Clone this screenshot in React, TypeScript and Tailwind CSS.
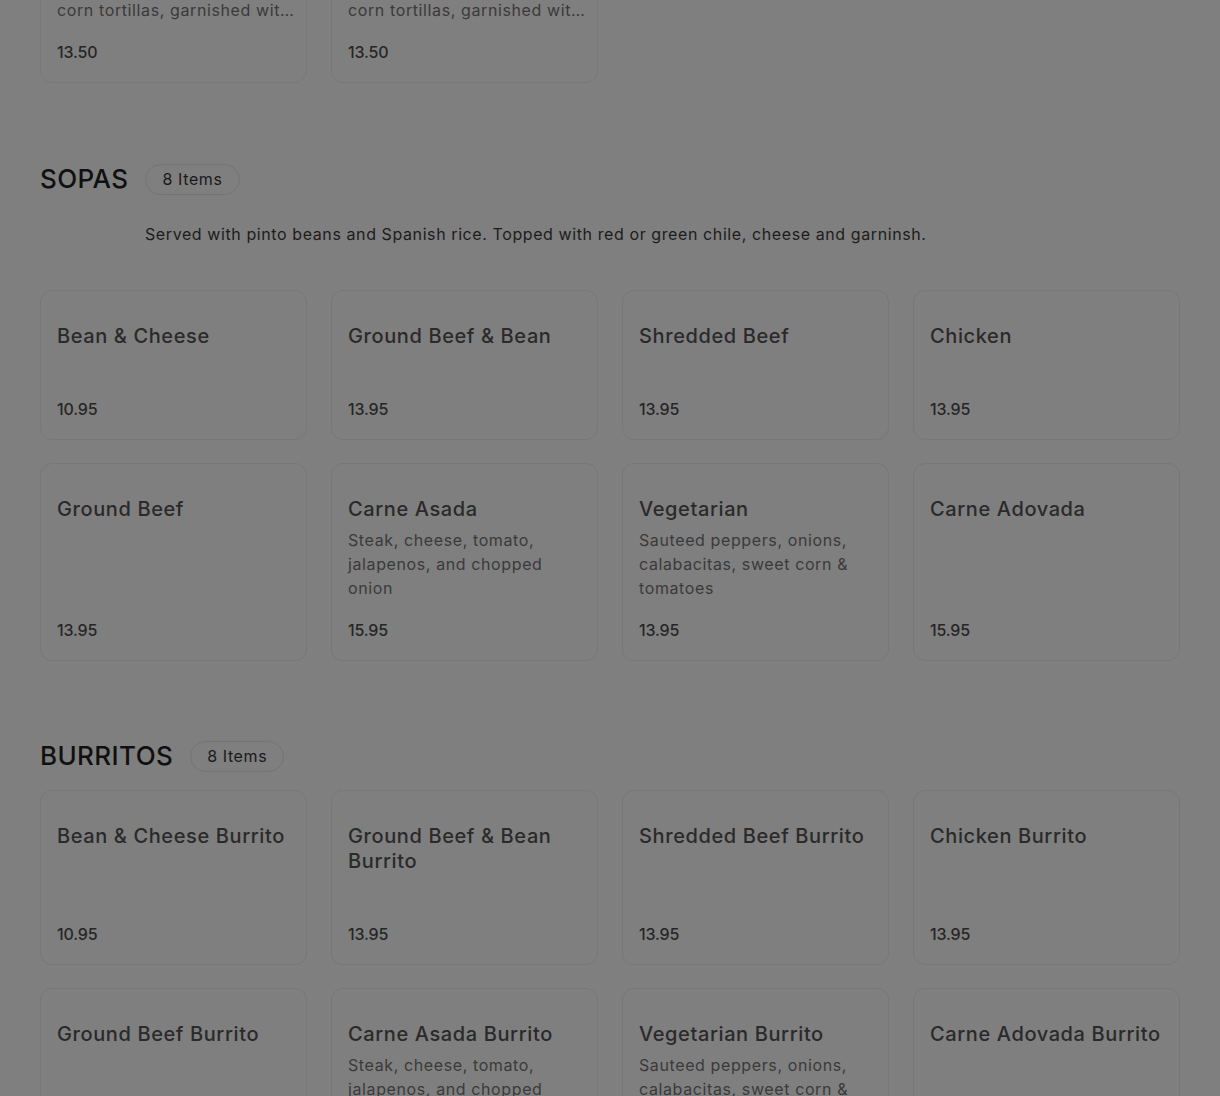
import React from "react";

type Item = { title: string; price: string; desc?: string[] };

const sopas: Item[] = [
  { title: "Bean & Cheese", price: "10.95" },
  { title: "Ground Beef & Bean", price: "13.95" },
  { title: "Shredded Beef", price: "13.95" },
  { title: "Chicken", price: "13.95" },
  { title: "Ground Beef", price: "13.95" },
  {
    title: "Carne Asada",
    price: "15.95",
    desc: ["Steak, cheese, tomato,", "jalapenos, and chopped", "onion"],
  },
  {
    title: "Vegetarian",
    price: "13.95",
    desc: ["Sauteed peppers, onions,", "calabacitas, sweet corn &", "tomatoes"],
  },
  { title: "Carne Adovada", price: "15.95" },
];

const burritos: Item[] = [
  { title: "Bean & Cheese Burrito", price: "10.95" },
  { title: "Ground Beef & Bean Burrito", price: "13.95" },
  { title: "Shredded Beef Burrito", price: "13.95" },
  { title: "Chicken Burrito", price: "13.95" },
  { title: "Ground Beef Burrito", price: "13.95" },
  {
    title: "Carne Asada Burrito",
    price: "15.95",
    desc: ["Steak, cheese, tomato,", "jalapenos, and chopped", "onion"],
  },
  {
    title: "Vegetarian Burrito",
    price: "13.95",
    desc: ["Sauteed peppers, onions,", "calabacitas, sweet corn &", "tomatoes"],
  },
  { title: "Carne Adovada Burrito", price: "15.95" },
];

const previous: Item[] = [
  {
    title: "Enchiladas",
    price: "13.50",
    desc: ["Two enchiladas rolled in", "corn tortillas, garnished wit\u2026"],
  },
  {
    title: "Stacked Enchiladas",
    price: "13.50",
    desc: ["Three stacked blue or yellow", "corn tortillas, garnished wit\u2026"],
  },
];

function Card({ item }: { item: Item }) {
  return (
    <div className="flex flex-col rounded-[12px] border border-[#777777] px-4 pt-[33px] pb-[18px]">
      <h3 className="text-[20px] leading-[25px] font-medium text-[#2a2a2a]">{item.title}</h3>
      <div className="mt-[6px] mb-[18px] min-h-[24px] text-[16px] leading-[24px] text-[#3a3a3a]">
        {item.desc?.map((line, i) => (
          <div key={i} className="whitespace-nowrap">
            {line}
          </div>
        ))}
      </div>
      <div className="mt-auto text-[16px] leading-[24px] font-medium tracking-[-0.01em] text-[#262626]">
        {item.price}
      </div>
    </div>
  );
}

function Section({
  name,
  count,
  description,
  items,
  className,
}: {
  name: string;
  count: string;
  description?: string;
  items: Item[];
  className: string;
}) {
  return (
    <section className={className}>
      <div className="flex items-center gap-[17px]">
        <h2 className="text-[26px] leading-[32px] font-medium tracking-[0.015em] text-[#101010]">{name}</h2>
        <span className="flex h-[31px] items-center rounded-full border border-[#747474] px-4 text-[16px] text-[#1a1a1a]">
          {count}
        </span>
      </div>
      {description ? (
        <p className="mt-[27px] mb-[44px] ml-[105px] text-[16px] leading-[24px] tracking-[0.037em] text-[#1c1c1c]">
          {description}
        </p>
      ) : (
        <div className="h-[18px]" />
      )}
      <div className="grid grid-cols-4 gap-x-6 gap-y-[23px]">
        {items.map((it) => (
          <Card key={it.title} item={it} />
        ))}
      </div>
    </section>
  );
}

export default function App() {
  return (
    <div className="h-[1096px] overflow-hidden bg-[#7f7f7f] font-['Inter',sans-serif] tracking-[0.038em]">
      <div className="-mt-[91px] px-10">
        <div className="grid grid-cols-4 gap-x-6">
          {previous.map((it) => (
            <Card key={it.title} item={it} />
          ))}
        </div>
        <Section
          className="mt-20"
          name="SOPAS"
          count="8 Items"
          description="Served with pinto beans and Spanish rice. Topped with red or green chile, cheese and garninsh."
          items={sopas}
        />
        <Section className="mt-[79px]" name="BURRITOS" count="8 Items" items={burritos} />
      </div>
    </div>
  );
}
